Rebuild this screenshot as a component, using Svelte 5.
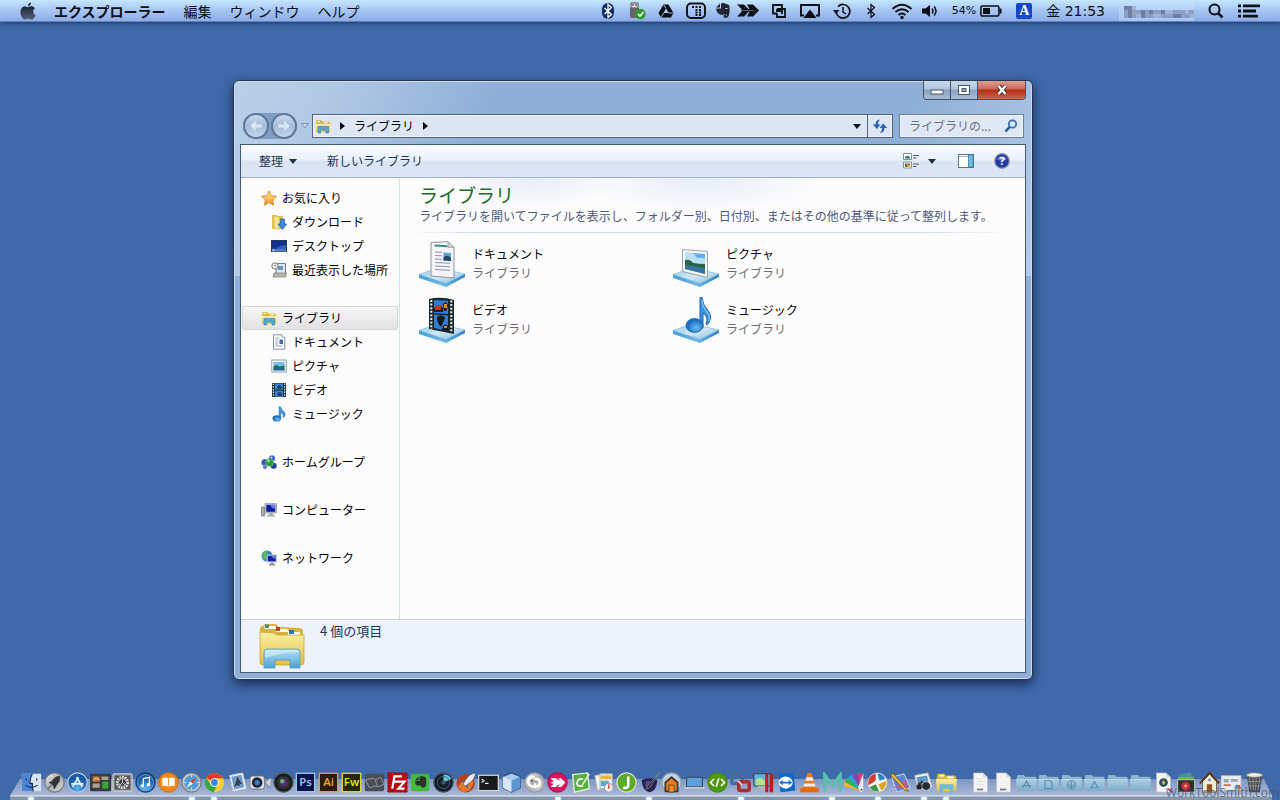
<script>
  const menus = ['エクスプローラー', '編集', 'ウィンドウ', 'ヘルプ'];

  const navGroups = [
    {
      label: 'お気に入り', icon: 'star',
      items: [
        { label: 'ダウンロード', icon: 'download' },
        { label: 'デスクトップ', icon: 'desktop' },
        { label: '最近表示した場所', icon: 'recent' }
      ]
    },
    {
      label: 'ライブラリ', icon: 'library', selected: true,
      items: [
        { label: 'ドキュメント', icon: 'doc' },
        { label: 'ピクチャ', icon: 'picture' },
        { label: 'ビデオ', icon: 'video' },
        { label: 'ミュージック', icon: 'music' }
      ]
    },
    { label: 'ホームグループ', icon: 'homegroup', items: [] },
    { label: 'コンピューター', icon: 'computer', items: [] },
    { label: 'ネットワーク', icon: 'network', items: [] }
  ];

  const libraries = [
    { label: 'ドキュメント', icon: 'doc' },
    { label: 'ピクチャ', icon: 'picture' },
    { label: 'ビデオ', icon: 'video' },
    { label: 'ミュージック', icon: 'music' }
  ];

  const bluetooth = 'M3.5 4.5L10.5 11L7 14V1L10.5 4L3.5 10.5';

  // [name, slot width, glyph width, markup on an 18 unit tall box]
  const status = [
    ['Bluetooth 共有', 28, 14, `<rect x="1" y="1" width="12" height="16" rx="6" fill="#0d2c66"/><path transform="translate(0 1.5)" d="${bluetooth}" fill="none" stroke="#fff" stroke-width="1.3"/>`],
    ['USB', 30, 18, `<path d="M3 1h7v5H3z" fill="#ddd" stroke="#555"/><path d="M2 6h9v8q0 2-2 2H4q-2 0-2-2z" fill="#666"/><path d="M5 2v2M8 2v2" stroke="#333"/><circle cx="12.500" cy="12" r="5.200" fill="#2a9a2c"/><path d="M10 12l2 2 3.500-4" fill="none" stroke="#fff" stroke-width="1.600"/>`],
    ['Drive', 28, 16, `<path d="M5.500 2.500h5l5 8.500-2.500 4.500H3L.5 11z" fill="#0c0f14"/><path d="M8 6.500L10.800 11H5.300z" fill="#a9cbf6"/><path d="M8 6.500L5.500 2.500M10.500 11h5M5.500 11L3 15.500" stroke="#a9cbf6" stroke-width=".9"/>`],
    ['表示', 32, 20, `<rect x="1" y="1.500" width="18" height="14.500" rx="4" fill="none" stroke="#0c0f14" stroke-width="1.900"/><path d="M6 5h2M9.500 5h2M13 5h2M9.500 8h2M13 8h2M9.500 10.500h2M13 10.500h2M9.500 13h2M13 13h2" stroke="#0c0f14" stroke-width="2"/>`],
    ['Evernote', 22, 14, `<path d="M0 5.500L4 1.500v4zM5 1.500Q8 .5 10 2q3 0 3.300 2 .8 4-.1 8-.7 4-3.700 4-2 0-2-2t2.500-2v2q1 0 1-1-1-1.500-3-1-1 1.500-4 .5Q0 11 .3 6.500H5z" fill="#20262f"/><path d="M9.500 6.500h2" stroke="#c6dffa"/>`],
    ['Skitch', 28, 22, `<path d="M0 2.500h7L11.500 7h1L10 2.500h6L22 8.500l-6 6h-6l2.500-4.500h-1L7 14.500H0L4.500 10V7z" fill="#0c0f14"/><path d="M5 8.500h12" stroke="#7185a4" stroke-width=".7"/>`],
    ['仮想マシン', 34, 16, `<path d="M6 11.500H2V3h9v3M6 7h8v8H6v-3.500M6 7v2h5v3" fill="none" stroke="#0c0f14" stroke-width="1.800"/>`],
    ['AirPlay', 28, 20, `<path d="M4 13.500H1V3h18v10.500h-3" fill="none" stroke="#0c0f14" stroke-width="1.900"/><path d="M10 7.500l6.500 8.500h-13z" fill="#0c0f14"/>`],
    ['Time Machine', 36, 18, `<path d="M3.200 10A6.800 6.800 0 1 0 5 4.600" fill="none" stroke="#0c0f14" stroke-width="1.700"/><path d="M0 8h6.500L3 12z" fill="#0c0f14"/><path d="M10 5v5l3 2" fill="none" stroke="#0c0f14" stroke-width="1.500"/>`],
    ['Bluetooth', 22, 12, `<path transform="translate(-1 1.500)" d="${bluetooth}" fill="none" stroke="#0c0f14" stroke-width="1.200"/>`],
    ['Wi-Fi', 40, 22, `<path d="M1.500 7Q11-1.500 20.500 7M4.500 10q6.500-5.500 13 0M7.500 13q3.500-3 7 0" fill="none" stroke="#0c0f14" stroke-width="2.100"/><circle cx="11" cy="15.500" r="1.700" fill="#0c0f14"/>`],
    ['音量', 16, 16, `<path d="M0 6.500h3.500L8 3v12L3.500 11.500H0z" fill="#0c0f14"/><path d="M10 6.500q2 2.500 0 5M12.300 4.500q3.400 4.500 0 9" fill="none" stroke="#0c0f14" stroke-width="1.500"/>`]
  ];

  const letterTile = (bg, fg, t) =>
    `<rect x="1.500" y="1.500" width="21" height="21" fill="${bg}" stroke="${fg}" stroke-width="1.400"/><text x="12" y="16.500" text-anchor="middle" font-family="Open Sans, sans-serif" font-weight="600" font-size="13" fill="${fg}">${t}</text>`;
  const folder = (mark) =>
    `<path d="M1 5q0-1.500 1.500-1.500H9l2 2h11q1.500 0 1.500 1.500v13H1z" fill="#8ab5cf"/><path d="M0 8.500h24L23 21.500H1z" fill="url(#macfolder)"/><path d="M0 8.500h24" stroke="#c3dfed" stroke-width=".8"/><g fill="none" stroke="#5d8fae" stroke-width="1.400">${mark}</g>`;
  const page = (extra) =>
    `<path d="M4 1h11l5 5v17H4z" fill="#f4f4f4" stroke="#bbb" stroke-width=".7"/><path d="M15 1v5h5" fill="#d4d4d4"/>${extra}`;
  const disc = (fill, ring, extra) =>
    `<circle cx="12" cy="12" r="11" fill="${fill}" stroke="${ring}" stroke-width="1.300"/>${extra}`;

  const dockApps = [
    ['Finder', `<rect x="1" y="2" width="22" height="20" fill="#d8e4f2"/><path d="M1 2h12q-3 5-3 11h3q0 5 1 9H1z" fill="#4b85d6"/><path d="M6 7v3M18 7v3M5 15q7 5 14 0M13 2q-3 5-3 11h3q0 5 1 9" fill="none" stroke="#17335f" stroke-width="1.300"/>`, true],
    ['Launchpad', disc('url(#silver)', '#777', `<path d="M18 5q-6 0-9 6l-3 1 2 1 3 3 1 3 2-4q4-3 4-10zM8 15l-3 4" fill="#333" stroke="#333"/>`)],
    ['App Store', disc('url(#blueball)', '#c3cbd6', `<path d="M6.500 17L13 6M17.500 17L11 6M5 13.500h14" stroke="#e9f6ff" stroke-width="2"/>`)],
    ['Mission Control', `<rect x="0" y="2" width="24" height="20" rx="1.500" fill="#393c3f"/><path d="M3 5h8v6H3z" fill="#c7773b"/><path d="M13 5h8v4h-8zM3 13h8v5H3z" fill="#a9a394"/><path d="M14 11h7v8h-7z" fill="#3aa33a"/><path d="M4 9l3-2 4 2" stroke="#f4d59a" fill="none"/>`],
    ['システム環境設定', `<rect x="1" y="2" width="22" height="20" rx="1" fill="#9da0a3" stroke="#d8d8d8"/><rect x="3" y="4" width="18" height="16" fill="#55585b"/><circle cx="12" cy="12" r="6" fill="none" stroke="#dcdcdc" stroke-width="3" stroke-dasharray="2 1"/><circle cx="12" cy="12" r="4.500" fill="#3b3d3f" stroke="#bdbdbd"/><path d="M12 12V8M12 12l3 3M12 12l-3 3" stroke="#ddd"/>`],
    ['iTunes', disc('url(#blueball)', '#1a3a63', `<circle cx="12" cy="12" r="9" fill="none" stroke="#7cc2f4" stroke-width=".7"/><path d="M9.500 16V7.500l7-1.500v8.500" fill="none" stroke="#fff" stroke-width="1.500"/><circle cx="8.300" cy="16" r="2" fill="#fff"/><circle cx="15.300" cy="14.700" r="2" fill="#fff"/>`)],
    ['iBooks', disc('#f08a1c', '#d97410', `<path d="M5 7q4-1.500 7 .5 3-2 7-.5v9q-4-1-7 .8-3-1.800-7-.8z" fill="#fff"/><path d="M12 7.500v9" stroke="#f08a1c"/>`)],
    ['Safari', disc('url(#silver)', '#777', `<circle cx="12" cy="12" r="8.300" fill="#4d9edb"/><path d="M17.500 6l-4 7.500-3-3z" fill="#e23c2a"/><path d="M6.500 18l4-7.500 3 3z" fill="#fff"/><path d="M12 4v2M12 18v2M4 12h2M18 12h2" stroke="#fff"/>`), true],
    ['Chrome', `<circle cx="12" cy="12" r="11" fill="#f7cf2e"/><path d="M12 12L2.500 6.500A11 11 0 0 1 21.700 7H12z" fill="#df3b2e"/><path d="M2.500 6.500A11 11 0 0 0 11 23l4.500-8.500-8-.5z" fill="#37a446"/><circle cx="12" cy="12" r="5" fill="#fff"/><circle cx="12" cy="12" r="3.900" fill="#3f86e0"/>`, true],
    ['Mail', `<path d="M3 4l15-3 4 18-15 3z" fill="#f5f5f5" stroke="#c8c8c8"/><path d="M5 5.500L16.500 3l3.200 14.500L8 20z" fill="#6d9bd1"/><path d="M12 5l2 4 4 5-4-1 1 3-4-1-3 2 2-5z" fill="#38404c"/>`],
    ['FaceTime', `<rect x="0" y="4.500" width="16.500" height="15" rx="3" fill="#dfe2e5" stroke="#6d7278"/><path d="M17 12l7-6v12z" fill="#d3d6d9" stroke="#6d7278" stroke-width=".8"/><circle cx="8.200" cy="12" r="6" fill="#1b2533"/><circle cx="8.200" cy="12" r="3" fill="#3f7fc0"/>`],
    ['カメラ', disc('#1b1c1e', '#55585c', `<circle cx="12" cy="12" r="7.500" fill="#2d3233"/><circle cx="12" cy="12" r="4.500" fill="#5b2a6e"/><circle cx="10.500" cy="10.500" r="2.500" fill="#5db07c"/>`)],
    ['Photoshop', letterTile('#0c1250', '#9fd2f5', 'Ps')],
    ['Illustrator', letterTile('#2c1c0c', '#f2a33a', 'Ai')],
    ['Fireworks', letterTile('#26280c', '#e5e62f', 'Fw')],
    ['ブック', `<rect x="1" y="2" width="22" height="20" rx="2" fill="#4a4e54"/><path d="M2 9l8-2 3 2 6-3 4 8-7 3-3-1-7 2zM13 9l2 7" fill="none" stroke="#9a9fa6"/>`],
    ['FileZilla', `<rect x="1" y="1" width="22" height="22" fill="#b80c14" stroke="#8c070d" stroke-dasharray="2 1"/><path d="M6 19L8.500 5H17M7 11h7M13 11h7l-7 8h7" fill="none" stroke="#fff" stroke-width="2.500"/>`],
    ['Evernote', `<rect x="1" y="2" width="21" height="20" rx="3" fill="#45b83e"/><path d="M6 9l4-4v4zM11 5q7-1 7.500 3 .8 10-3.500 10-2.500 0-2.500-2.500h-4Q5.500 15 6 10h5z" fill="#26332a"/>`],
    ['レーダー', disc('#141d25', '#40505e', `<path d="M12 12l9-4A9.500 9.500 0 0 0 12 3z" fill="#6cc6e0"/><circle cx="12" cy="12" r="7" fill="none" stroke="#3b6c80"/><circle cx="12" cy="12" r="2.500" fill="#325c6c"/>`)],
    ['ロケット', `<circle cx="11" cy="13" r="10.500" fill="#b3401c"/><path d="M2 17q7-12 18-6-2 12-12 12z" fill="#e8772b"/><path d="M22 1q-7 1-11 8l-3 5 3 2 5-4q6-4 6-11z" fill="#e4e9ef" stroke="#555" stroke-width=".7"/><path d="M10 9l-5 2 4 1M14 14l-1 6-2-4" fill="#4b6c9f"/>`],
    ['ターミナル', `<rect x="0" y="3" width="24" height="19" fill="#cfd2d5"/><rect x="1.500" y="4.500" width="21" height="16" fill="#17191b"/><path d="M4 8l3 2-3 2M8 13h4" fill="none" stroke="#eee" stroke-width="1.200"/>`],
    ['VirtualBox', `<path d="M12 1l10 4v13l-10 5L2 18V5z" fill="#a9cdf0" stroke="#2f5178" stroke-width="1.400"/><path d="M2 5l10 5v13L2 18z" fill="#d6e8f8"/><path d="M12 10l10-5v13l-10 5z" fill="#5e97cf"/>`],
    ['ファイル', disc('url(#silver)', '#999', `<path d="M12 6q-6-2-7 4t6 7M12 8q6-1 6 4t-5 5q-1-2 0-4" fill="none" stroke="#fff" stroke-width="3"/><circle cx="9" cy="10" r="1" fill="#333"/>`)],
    ['Skitch', disc('#e0145c', '#b50c46', `<path d="M4 7h6l3 2.500h2L12 7h4l5 5-5 5h-4l3-2.500h-2L10 17H4l4-4H5v-2h3z" fill="#fff"/>`), true],
    ['Coda', `<path d="M3 3l17-2 2 18-17 4z" fill="#56b03a" stroke="#e6f1d8" stroke-width="1.500"/><path d="M15 8q-6-1-7 4t7 4" fill="none" stroke="#fff" stroke-width="2"/><path d="M22 2l-8 13" stroke="#d6eec9" stroke-width="2"/>`],
    ['書類', `<path d="M2 4l12-2 3 16-12 3z" fill="#f2f2f2" stroke="#aaa"/><path d="M8 2h14v17H8z" fill="#e8eef5" stroke="#aaa"/><path d="M9 4h12v4H9z" fill="#f0b23b"/><path d="M9 10h9v6H9z" fill="#64a2d8"/><circle cx="18" cy="18" r="5" fill="#eee" stroke="#999"/><path d="M18 14v5" stroke="#d33" stroke-width="1.500"/>`],
    ['Jedit', disc('#5cab27', '#dfe8d6', `<path d="M14 5v10q0 4-6 3" fill="none" stroke="#fff" stroke-width="3"/>`)],
    ['ペン', `<path d="M3 9q9-4 18 0-1 13-9 14Q4 22 3 9z" fill="#25204f"/><circle cx="11" cy="14" r="4" fill="#51488a"/><path d="M23 1L10 16l-2 4 4-2z" fill="#22242a" stroke="#999" stroke-width=".7"/>`, true],
    ['ホーム', disc('#c6d2da', '#91a2ae', `<path d="M5 12l7-6 7 6v10H5z" fill="#ef7b1a" stroke="#383838" stroke-width="2"/><path d="M9 15h6v8H9z" fill="#f68f24" stroke="#444"/>`)],
    ['ノート', `<path d="M3 6h18v11H3z" fill="#5f9fda" stroke="#2b3b4a"/><path d="M0 17h24l-1 2H1z" fill="#c4cad0"/>`],
    ['コード', disc('#4f9a12', '#448a0c', `<path d="M8 8l-4 4 4 4M16 8l4 4-4 4M13.500 7l-3 10" fill="none" stroke="#fff" stroke-width="1.900"/>`)],
    ['VMware', `<rect x="2" y="3" width="12" height="10" rx="2" fill="none" stroke="#466b97" stroke-width="4"/><rect x="10" y="11" width="12" height="10" rx="2" fill="none" stroke="#a92d31" stroke-width="4"/><path d="M9 10l5 5" stroke="#ddd" stroke-width="2"/>`, true],
    ['Parallels', `<path d="M1 2h20v14H1z" fill="#60b3dc" stroke="#333"/><path d="M3 9q6-5 11 2v4H3z" fill="#b8dd8d"/><path d="M6 16h8l2 4H4z" fill="#aeb5bb"/><path d="M14 2h3.500v21H14zM19 2h4v21h-4z" fill="#b81d21"/>`],
    ['TeamViewer', `<path d="M3 2l17-1 2 20-17 2z" fill="#0f66c8"/><ellipse cx="11" cy="12" rx="8" ry="7" fill="#fff"/><path d="M3.500 12l4-3v2h7V9l4 3-4 3v-2h-7v2z" fill="#1a6cc9"/>`],
    ['VLC', `<path d="M10 1h4l6 18H4z" fill="#ef7d16"/><path d="M8.500 6h7l1.300 4H7.200zM6 13h12l1 3.500H5z" fill="#eee"/><path d="M2 18h20l1 5H1z" fill="#e4690c"/>`],
    ['M', `<path d="M3 22V3l9 13 9-13v19" fill="none" stroke="#55c2ae" stroke-width="3.500"/>`, true],
    ['カラー', `<path d="M20 22L1 11l3-5z" fill="#35b34a"/><path d="M20 22L4 6l5-3z" fill="#2da1d6"/><path d="M20 22L9 3l6-2z" fill="#8048b5"/><path d="M20 22L15 1h6z" fill="#e0367a"/><path d="M20 22L0 16v-5z" fill="#f2b928"/><path d="M22 1v20l-3 2-3-5z" fill="#efefef"/><circle cx="20" cy="20" r="1" fill="#222"/>`],
    ['Picasa', `<circle cx="12" cy="12" r="11" fill="#fff" stroke="#ccc"/><path d="M12 2a10 10 0 0 1 9 6l-7 2z" fill="#2d82d0"/><path d="M22 10a10 10 0 0 1-6 11l-3-7z" fill="#e0a51e"/><path d="M14 22A10 10 0 0 1 3 17l7-3z" fill="#3f9b43"/><path d="M2 15A10 10 0 0 1 10 2v8z" fill="#d83a2c"/><path d="M9 9h6l-3 6z" fill="#eee"/>`, true],
    ['描画', `<path d="M2 6l14-4 7 16-15 5z" fill="#5a85cf" stroke="#dfe4ef"/><path d="M4 18l14-9 3 9z" fill="#c5579a"/><path d="M3 1l16 18 2 3-4-1L1 4z" fill="#f0b52a" stroke="#5b4212" stroke-width=".7"/>`],
    ['プレビュー', `<path d="M2 4l15-3 5 16-16 4z" fill="#f3f3f3" stroke="#bbb"/><path d="M4 6l12-2 3 12-12 3z" fill="#5e96c8"/><path d="M5 13l5-3 8 4v3l-11 2z" fill="#35424a"/><circle cx="15" cy="16" r="5" fill="#252b35" stroke="#cfd3d8"/><circle cx="7" cy="17" r="3" fill="#222"/>`, true],
    ['エクスプローラー', `<path d="M1 4q0-2 2-2h7l1 2h10q2 0 2 2v15H1z" fill="#d9b944"/><path d="M4 4h5M13 6h7" stroke="#fff" stroke-width="2"/><path d="M0 8h24l-1 14H1z" fill="url(#yellow)"/><path d="M4 23v-9h16v9h-4v-4H8v4z" fill="#72b9dc"/>`, true]
  ];

  const dockFiles = [
    ['MD', page(`<path d="M7 8h8M7 11h10M7 14h9" stroke="#ddd"/><path d="M8 20h7" stroke="#777" stroke-width="2"/>`)],
    ['TXT', page(`<path d="M8 20h7" stroke="#777" stroke-width="2"/>`)],
    ['アプリケーション', folder(`<path d="M8 18l4-8 4 8M7 15.500h10"/>`)],
    ['書類フォルダ', folder(`<path d="M8 10h6l2 2v7H8z"/>`)],
    ['ダウンロード', folder(`<circle cx="12" cy="14.500" r="4.500"/><path d="M12 11v6M9.500 14.500l2.500 3 2.500-3"/>`)],
    ['ドライブ', folder(`<path d="M12 11l4 7H8z"/>`)],
    ['フォルダ', folder('')],
    ['フォルダ', folder('')],
    ['ログ', page(`<circle cx="12" cy="12" r="5" fill="#2a4d60"/><path d="M10 12l2-3 2 3-2 3z" fill="#dfb632"/><path d="M17 19l5 4" stroke="#bb3946" stroke-width="2"/>`)],
    ['写真', `<path d="M3 3l14-3 3 12-13 3z" fill="#3f91a5"/><path d="M2 6l18-1 2 14H3z" fill="#71b04d"/><path d="M2 9h19v14H2z" fill="#253224" stroke="#eee" stroke-width=".7"/><circle cx="11" cy="16" r="5" fill="#d42458"/><circle cx="11" cy="16" r="1.700" fill="#f0b73d"/>`],
    ['家', `<path d="M4 11l8-9 8 9v12H4z" fill="#f1ead5" stroke="#7a5632"/><path d="M1 13L12 1l11 12" fill="none" stroke="#5d3b22" stroke-width="2.500"/><path d="M9 14h6v9H9z" fill="#8d5427"/><circle cx="12" cy="9" r="1.600" fill="#6892af"/>`],
    ['ウインドウ', `<path d="M0 4h23v17H0z" fill="#e9edf1" stroke="#aaa"/><path d="M3 8h6v4H3zM11 8h8v3h-8z" fill="#99a8b4"/><path d="M3 15h8" stroke="#ca6b52" stroke-width="2"/><circle cx="19" cy="18" r="3.500" fill="#4d8ed8"/><path d="M19 14.500a3.500 3.500 0 0 1 3 5L19 18z" fill="#e04838"/><path d="M22 19.500a3.500 3.500 0 0 1-5 1L19 18z" fill="#efba32"/>`],
    ['ゴミ箱', `<path d="M3 3l3 20h12l3-20z" fill="#484b4e"/><path d="M6 6l2 15M10 6l1 15M14 6l-1 15M18 6l-2 15M4 11h16M5 16h14" stroke="#a0a4a8" stroke-width=".8"/><ellipse cx="12" cy="3.500" rx="9.500" ry="2.700" fill="#d9dbdd" stroke="#777"/><path d="M6 4q2-4 4-1 3-3 4 0 3-2 4 1z" fill="#fff"/>`]
  ];

  const smallIcons = {
    star: `<path d="M8 .8l2.200 4.900 5.300.6-3.900 3.600 1 5.300L8 12.500l-4.600 2.700 1-5.300L.5 6.300l5.300-.6z" fill="url(#starfill)" stroke="#d9851c" stroke-width=".9"/>`,
    download: `<path d="M1 1h5l1 1h5v13H1z" fill="#e4c250"/><path d="M3 2l5 1v12.500l-5-1.500z" fill="#f8e694" stroke="#cfae45" stroke-width=".5"/><path d="M9.500 5h4v5h2.300L11.500 15.500 7 10h2.500z" fill="#3b8be0" stroke="#1f5ba8" stroke-width=".7"/>`,
    desktop: `<rect x=".5" y="2.500" width="15" height="11" fill="#2c5fc0" stroke="#22365e"/><path d="M1 3h14v4Q7 7 3 13H1z" fill="#16308c"/><path d="M1 11.500h14v2H1z" fill="#6784b4"/><circle cx="2.500" cy="12" r="1.300" fill="#8fc1e8"/>`,
    recent: `<path d="M5 1.500h9.500V13H5z" fill="#dfe6ee" stroke="#6d7d8e"/><path d="M7 4h5v4H7z" fill="#6796c0"/><circle cx="4" cy="4" r="3.200" fill="#f2f2f2" stroke="#777"/><path d="M4 2.500V4h1.500" fill="none" stroke="#555" stroke-width=".7"/><path d="M3 11h12.500l-1 4H2z" fill="#b9b5ac" stroke="#7f7b73" stroke-width=".7"/>`,
    library: `<path d="M1 3q0-1 1-1h4l1 1.500h7q1 0 1 1V14H1z" fill="#d8bb4c"/><path d="M2.500 3.500H5M9 4.700h4" stroke="#fff"/><path d="M.3 6h15.400L15 14H1z" fill="url(#yellow)"/><path d="M3 15V8.500h10.500V15H11v-3H5.500v3z" fill="#4fa9d8" stroke="#2b85b5" stroke-width=".6"/>`,
    doc: `<path d="M2.500.8h8.500l2.800 2.800v11.600H2.500z" fill="#fff" stroke="#8193aa"/><path d="M11 .8v2.800h2.800" fill="#d5dfe9" stroke="#8193aa" stroke-width=".6"/><path d="M4.300 4h4M4.300 6h3M4.300 8h3M4.300 10h3M4.300 12h7.500" stroke="#7c93b8" stroke-width=".8"/><path d="M8.500 5.500h3.500v4.500H8.500z" fill="#376fa8"/>`,
    picture: `<rect x=".8" y="2" width="14.400" height="12" fill="#fff" stroke="#8c9cab"/><path d="M2.500 3.800h11v8.500h-11z" fill="#75bdeb"/><path d="M2.500 8.500q3-3 6 0l5-1v4.800h-11z" fill="#24735e"/><path d="M2.500 10.700h11v1.600h-11z" fill="#1f62a0"/>`,
    video: `<path d="M1 1h14v14H1z" fill="#19303a"/><path d="M4 1.500h8v6H4zM4 8.700h8v6H4z" fill="#3a86cf"/><path d="M6 5q2-4 5 0l-1 2H7zM6 12q3-4 5 0v2H7z" fill="#1b4272"/><path d="M2.400 1.500v13M13.600 1.500v13" stroke="#d5ecef" stroke-width="1.200" stroke-dasharray="1.500 1.200"/>`,
    music: `<path d="M8.200 12V.8h1.200q.6 2.600 3 4.200 3 2.500.8 6-.6.500-1 0Q13 7.500 9.700 6.500v6z" fill="#3f97e2" stroke="#1d67b4" stroke-width=".6"/><ellipse cx="5.800" cy="12.400" rx="4.300" ry="3.100" fill="url(#note)"/>`,
    homegroup: `<g stroke="#fff" stroke-width=".3"><circle cx="11" cy="4.500" r="3.200" fill="#2f5cc6"/><circle cx="3.800" cy="8.500" r="3.500" fill="#2f54b2"/><circle cx="12.600" cy="11.800" r="3.200" fill="#213f98"/><circle cx="8.500" cy="8.500" r="4" fill="#2c9a3c"/><circle cx="4" cy="13" r="2.200" fill="#5577c6"/></g><circle cx="7.500" cy="7" r="1.200" fill="#bfe9bd"/><circle cx="10.500" cy="3.500" r="1" fill="#c2d5fb"/>`,
    computer: `<path d="M.5 5h3v9h-3z" fill="#9fb09f" stroke="#667" stroke-width=".6"/><path d="M4 1.500h11.500v9.500H4z" fill="#c5ccd5" stroke="#7c8694" stroke-width=".6"/><path d="M5.300 2.800h8.900v7H5.300z" fill="#101ca0"/><path d="M9.500 2.800h4.700v4q-4 0-4.700-4z" fill="#6c7fe6"/><path d="M8 11h4v2h2v1.500H6V13h2z" fill="#a5adb5"/>`,
    network: `<circle cx="6" cy="6" r="5.500" fill="#2f83c9"/><path d="M1 4q3-4 6-3l-2 4 1 3-3 2Q1 8 1 4z" fill="#54bd58"/><path d="M5.500 4.500H16v8H5.500z" fill="#c3cbd5"/><path d="M6.700 5.700h8.100v5.600H6.700z" fill="#1220a8"/><path d="M10.500 5.700h4.300v3q-3.500 0-4.300-3z" fill="#6377e2"/><path d="M9.500 12.500h3v1.500h1.700v1.500H8V14h1.500z" fill="#8d969f"/>`
  };

  const stand = `<path d="M1 34.500L20 28l27 6-19 9.500z" fill="url(#standtop)" stroke="#7fb8dc" stroke-width=".7"/><path d="M1 34.500v3.500l27 9 19-10v-3L28 43.500z" fill="url(#standside)"/>`;
  const bigIcons = {
    doc: `${stand}<path d="M13 36V2.500l17-.8 6 6V38z" fill="#f4f4fa" stroke="#8f939c"/><path d="M30 1.700v5.500l6 .5z" fill="#cdd3da" stroke="#8f939c" stroke-width=".7"/><path d="M16.500 5.500l13 .8" stroke="#3d8e8d" stroke-width="2"/><path d="M17 12l7 .3M17 15.500l7 .3M17 19l7 .3M17 22.500l15 .8M17 26l15 .8M17 29.500l15 .8" stroke="#8388a5" stroke-width=".9"/><path d="M25.500 12.500l7.500.5v8l-7.500-.5z" fill="#5ba5d4"/><path d="M25.500 17q4-3 7.500 1v3l-7.500-.5z" fill="#244a68"/>`,
    picture: `${stand}<path d="M10.500 9.500l25 2v26l-25-6z" fill="#f7f7f7" stroke="#9aa2a9"/><path d="M13 12.500l20 1.500v20l-20-5z" fill="#5eb0ea"/><path d="M13 13q10-1 12 5 5-1 8 1v6l-20-3z" fill="#b9e0f6"/><path d="M13 20q5-1 8 3 6 1 12 1v6l-20-4z" fill="#2b6546"/><path d="M13 25l20 3v6l-20-5z" fill="#35749b"/>`,
    video: `${stand}<path d="M11 3Q23 0 36 4v34L11 33z" fill="#18282b"/><path d="M16 4l14 .8V18l-14-1zM16 18.500l14 1V35l-14-3z" fill="#2d7ed4"/><path d="M16 12l5-3 4 3v4l-9-.3zM25 8q4-4 5 2l-2 5h-2zM19 21q5-4 8 1l-4 9q-4-4-4-10zM25 30q3-3 5 0v5l-6-1z" fill="#14181d"/><path d="M17 9h6v5h-6z" fill="#b73b35"/><path d="M26 8h3v4h-3zM26 30h3v2h-3z" fill="#dc8c2c"/><path d="M13.300 4v29.500M33.300 4.500V37" stroke="#e1f2f2" stroke-width="2" stroke-dasharray="2 1.600"/>`,
    music: `${stand}<path d="M28 32V1.500h2Q31 9 35.500 14q6 7 .5 14-.8 1-2 0 3-7-3-11V32z" fill="#3d93dd" stroke="#1c66af"/><path d="M30 4q1 8 5 12 3.500 4 2 9" fill="none" stroke="#8cc9f6" stroke-width="1.200"/><ellipse cx="22.500" cy="29.500" rx="8.500" ry="7" fill="url(#note)" stroke="#1c66af" stroke-width=".8"/>`
  };
</script>

{#snippet dockItem([name, art, running])}
  <li>
    <button type="button" aria-label={name}>
      <svg viewBox="0 0 24 24" width="21" height="21">{@html art}</svg>
    </button>
    <i class:running></i>
  </li>
{/snippet}

<svg class="defs" width="0" height="0" aria-hidden="true">
  <defs>
    <linearGradient id="yellow" x2="0" y2="1"><stop stop-color="#fbf0a8" /><stop offset="1" stop-color="#e2bf3f" /></linearGradient>
    <linearGradient id="macfolder" x2="0" y2="1"><stop stop-color="#a9d0e4" /><stop offset="1" stop-color="#7dadca" /></linearGradient>
    <linearGradient id="silver" x2="1" y2="1"><stop stop-color="#f4f4f4" /><stop offset=".5" stop-color="#a9abad" /><stop offset="1" stop-color="#dcdcdc" /></linearGradient>
    <radialGradient id="blueball" cy=".8"><stop stop-color="#5fb8f4" /><stop offset="1" stop-color="#1a5ba8" /></radialGradient>
    <radialGradient id="note" cx=".6" cy=".65"><stop stop-color="#67bdf5" /><stop offset="1" stop-color="#1d6fc0" /></radialGradient>
    <linearGradient id="starfill" x2="0" y2="1"><stop stop-color="#fff29a" /><stop offset="1" stop-color="#f58a1f" /></linearGradient>
    <linearGradient id="standtop" x2="1" y2="1"><stop stop-color="#8fc3df" /><stop offset=".5" stop-color="#d2e8f3" /><stop offset="1" stop-color="#7fbce0" /></linearGradient>
    <linearGradient id="standside" x2="1"><stop stop-color="#3f9fd8" /><stop offset=".5" stop-color="#6db8e3" /><stop offset="1" stop-color="#2f86c4" /></linearGradient>
    <linearGradient id="tray" x2="0" y2="1"><stop stop-color="#b6e2f6" /><stop offset="1" stop-color="#4ba2d4" /></linearGradient>
    <linearGradient id="apple" x2="0" y2="1"><stop stop-color="#1b2433" /><stop offset="1" stop-color="#53637d" /></linearGradient>
  </defs>
</svg>

<div class="desktop">
  <header class="menubar">
    <button type="button" class="apple" aria-label="アップル">
      <svg viewBox="0 0 16 18" width="16" height="18"><path d="M8 5.200C9 5 10 4.200 11.700 4.300q2.200.2 3.300 1.900-2 1.200-1.900 3.400.1 2.500 2.400 3.500-1.500 4.400-3.600 4.500c-1.500 0-2-.8-3.600-.8s-2.200.8-3.500.8C2.300 17.500.5 13.500.5 10.300c0-3.800 2.200-5.700 4.300-5.700C6.100 4.600 7.200 5.300 8 5.200z" fill="url(#apple)" /><path d="M8 4.200Q8 1.100 11 .4 11.200 3.400 8 4.200z" fill="#1b2433" /></svg>
    </button>
    <nav>
      {#each menus as m, i}<button type="button" class:app={i === 0}>{m}</button>{/each}
    </nav>
    <div class="status">
      {#each status as [name, slot, w, art]}
        <button type="button" aria-label={name} style="width: {slot}px">
          <svg viewBox="0 0 {w} 18" width={w} height="18">{@html art}</svg>
        </button>
      {/each}
    </div>
    <button type="button" class="battery">
      54%
      <svg viewBox="0 0 22 12" width="22" height="12"><rect x=".9" y=".9" width="18" height="10.200" rx="1.500" fill="none" stroke="#0c0f14" stroke-width="1.500" /><path d="M3 3h7v6H3z" fill="#0c0f14" /><path d="M20.500 3.500v5" stroke="#0c0f14" stroke-width="2" /></svg>
    </button>
    <button type="button" class="ime">A</button>
    <span class="clock">金 21:53</span>
    <svg class="user" viewBox="0 0 75 20" width="75" height="20" aria-hidden="true">
      <path d="M0 0h75v20H0z" fill="#c3dcfa" fill-opacity=".5" />
      <path d="M5 5h8v4H5zM5 9h70v8H5z" fill="#8c9fc1" />
      <path d="M5 5h8v4H5zM9 9h4v8H9zM22 9h4v8h-4zM30 9h4v4h-4zM42 9h4v4h-4zM54 13h8v4h-8z" fill="#6d7fa2" />
      <path d="M13 5h4v4h-4zM17 13h5v4h-5zM34 13h8v4h-8zM46 9h8v4h-8zM66 9h4v4h-4zM71 13h4v4h-4z" fill="#a1b4d7" />
    </svg>
    <button type="button" aria-label="検索">
      <svg viewBox="0 0 16 16" width="16" height="16"><circle cx="6.500" cy="6.500" r="5" fill="none" stroke="#0c0f14" stroke-width="2" /><path d="M10 10l4.500 4.500" stroke="#0c0f14" stroke-width="2.600" /></svg>
    </button>
    <button type="button" aria-label="通知センター">
      <svg viewBox="0 0 22 14" width="22" height="14"><path d="M0 1.800h3M0 7h3M0 12.200h3M5 1.800h17M5 7h13M5 12.200h15" stroke="#0c0f14" stroke-width="2.800" /></svg>
    </button>
  </header>

  <main>
    <section class="window" aria-label="ライブラリ">
      <div class="titlebar">
        <div class="caption">
          <button type="button" aria-label="最小化"><svg viewBox="0 0 14 12" width="14" height="12"><rect x="1" y="6" width="12" height="4" fill="#fff" stroke="#4a5668" /></svg></button>
          <button type="button" aria-label="最大化"><svg viewBox="0 0 14 12" width="14" height="12"><rect x="1.500" y="1.500" width="11" height="9" fill="#fff" stroke="#4a5668" /><rect x="5" y="4.500" width="4" height="3" fill="#93a9c6" stroke="#4a5668" /></svg></button>
          <button type="button" class="close" aria-label="閉じる"><svg viewBox="0 0 14 12" width="14" height="12"><path d="M3.500 2l7 8M10.500 2l-7 8" stroke="#4c3034" stroke-width="4.200" /><path d="M3.500 2l7 8M10.500 2l-7 8" stroke="#fff" stroke-width="2.400" /></svg></button>
        </div>
      </div>

      <div class="navrow">
        <div class="travel">
          <button type="button" aria-label="戻る"><svg viewBox="0 0 16 16" width="16" height="16"><path d="M8 2v4h6v4H8v4L2 8z" fill="#dbe6f2" stroke="#b2c4da" stroke-width=".7" /></svg></button>
          <button type="button" aria-label="進む"><svg viewBox="0 0 16 16" width="16" height="16"><path d="M8 2v4H2v4h6v4l6-6z" fill="#dbe6f2" stroke="#b2c4da" stroke-width=".7" /></svg></button>
        </div>
        <button type="button" class="history" aria-label="履歴"><svg viewBox="0 0 8 6" width="8" height="6"><path d="M.5.500h7L4 5z" fill="#c5d6ea" stroke="#6f89ab" stroke-width=".8" /></svg></button>
        <div class="address">
          <svg viewBox="0 0 16 16" width="16" height="16">{@html smallIcons.library}</svg>
          <svg class="sep" viewBox="0 0 5 8" width="5" height="8"><path d="M0 0l5 4-5 4z" fill="#000" /></svg>
          <button type="button">ライブラリ</button>
          <svg class="sep" viewBox="0 0 5 8" width="5" height="8"><path d="M0 0l5 4-5 4z" fill="#000" /></svg>
          <button type="button" class="drop" aria-label="以前の場所"><svg viewBox="0 0 8 5" width="8" height="5"><path d="M0 0h8L4 5z" fill="#0b0b2b" /></svg></button>
          <button type="button" class="refresh" aria-label="更新"><svg viewBox="0 0 16 16" width="16" height="16"><path d="M8 1.500Q3.500 2 3.500 6.500H.8L4.800 11 8.500 6.500H6Q6 3.500 8 1.500z" fill="#2a63b4" /><path d="M8 15q4.500-.5 4.500-5h2.700l-4-4.500L7.500 10H10q0 3-2 5z" fill="#2a63b4" /></svg></button>
        </div>
        <label class="search">
          <input type="text" aria-label="検索" placeholder="ライブラリの..." />
          <svg viewBox="0 0 14 14" width="14" height="14"><circle cx="8.500" cy="5" r="3.700" fill="#dceafa" stroke="#2f6cb4" stroke-width="1.700" /><path d="M5.800 7.800L1.500 12.500" stroke="#255a9e" stroke-width="2.500" /></svg>
        </label>
      </div>

      <div class="client">
        <div class="toolbar">
          <button type="button">整理 <svg viewBox="0 0 8 5" width="8" height="5"><path d="M0 0h8L4 5z" fill="#1e3050" /></svg></button>
          <button type="button">新しいライブラリ</button>
          <div class="tools">
            <button type="button" aria-label="表示方法の変更"><svg viewBox="0 0 16 16" width="16" height="16"><path d="M.5.500h8v6h-8zM.5 9h8v6h-8z" fill="#fff" stroke="#7f91a8" /><path d="M2 4q2-2 5 0v1.500H2z" fill="#23736c" /><path d="M2 10.500h2.500V14H2z" fill="#477f2b" /><path d="M4.500 10.500H7V12H4.500z" fill="#c8443a" /><path d="M4.500 12H7v2H4.500z" fill="#d9b52c" /><path d="M10 2.500h6M10 5h3.500M10 11h6M10 13.500h3.500" stroke="#4c5c74" /></svg></button>
            <button type="button" aria-label="その他のオプション"><svg viewBox="0 0 8 5" width="8" height="5"><path d="M0 0h8L4 5z" fill="#1e3050" /></svg></button>
            <button type="button" class="preview" aria-label="プレビュー"><svg viewBox="0 0 16 14" width="16" height="14"><rect x=".5" y=".5" width="15" height="13" fill="#fdfdfe" stroke="#5b7594" /><path d="M1 2.500h10" stroke="#a7bacd" /><path d="M10.500 1h4.500v12h-4.500z" fill="#6fbfdc" stroke="#3a7ba0" stroke-width=".8" /></svg></button>
            <button type="button" aria-label="ヘルプ"><svg viewBox="0 0 16 16" width="16" height="16"><circle cx="8" cy="8" r="7.300" fill="#1f3aa5" stroke="#8f97a5" stroke-width="1.300" /><path d="M3 6q5-6 10 0-5 3-10 0z" fill="#6f86d5" /><text x="8" y="12" text-anchor="middle" font-family="Open Sans, sans-serif" font-weight="700" font-size="11" fill="#fff">?</text></svg></button>
          </div>
        </div>

        <div class="panes">
          <nav class="tree" aria-label="ナビゲーション">
            {#each navGroups as g}
              <ul>
                <li><a href="#top" class:selected={g.selected}><svg viewBox="0 0 16 16" width="16" height="16">{@html smallIcons[g.icon]}</svg>{g.label}</a></li>
                {#each g.items as item}
                  <li><a href="#top" class="child"><svg viewBox="0 0 16 16" width="16" height="16">{@html smallIcons[item.icon]}</svg>{item.label}</a></li>
                {/each}
              </ul>
            {/each}
          </nav>

          <div class="content">
            <div class="heading">
              <h1>ライブラリ</h1>
              <p>ライブラリを開いてファイルを表示し、フォルダー別、日付別、またはその他の基準に従って整列します。</p>
            </div>
            <ul class="grid">
              {#each libraries as lib}
                <li>
                  <svg viewBox="0 0 48 48" width="48" height="48">{@html bigIcons[lib.icon]}</svg>
                  <div><strong>{lib.label}</strong><span>ライブラリ</span></div>
                </li>
              {/each}
            </ul>
          </div>
        </div>

        <footer class="details">
          <svg viewBox="0 0 46 46" width="46" height="46">
            <path d="M1 6q0-3 3-3l2-2h11l3 3 20 1q4 0 4 3v32H1z" fill="#d5b33c" />
            <path d="M5 3h11l2 3H6zM17 6h11l2 3H17zM29 9h12v3H29z" fill="#fff" />
            <path d="M6 1.500h4V5H6z" fill="#3f9d46" /><path d="M17 4h4v4h-4z" fill="#c93b30" /><path d="M30 7h5v4h-5z" fill="#3573b8" />
            <path d="M1 9l14 1 3 2h27v27q0 3-3 3H4q-3 0-3-3z" fill="url(#yellow)" stroke="#c9a433" stroke-width=".8" />
            <path d="M5 45V29q0-3 3-3h30q3 0 3 3v16H31v-8H16v8z" fill="url(#tray)" stroke="#4a9cca" stroke-width=".8" />
            <path d="M6 35V29q0-2 2-2h30q2 0 2 2-15 0-34 6z" fill="#fff" fill-opacity=".4" />
          </svg>
          <span>4 個の項目</span>
        </footer>
      </div>
    </section>
  </main>

  <footer class="dock">
    <ul>
      {#each dockApps as d}{@render dockItem(d)}{/each}
      <li class="divider" aria-hidden="true"></li>
      {#each dockFiles as d}{@render dockItem(d)}{/each}
    </ul>
    <span class="mark">WorkToolSmith.com</span>
  </footer>
</div>

<style>
  :global(body) { margin: 0; }
  .defs { position: absolute; }
  .desktop {
    display: flex;
    flex-direction: column;
    min-height: 100vh;
    background: #4069aa;
    font: 12px/16px "Noto Sans CJK JP", sans-serif;
    color: #000;
  }
  button {
    display: flex;
    align-items: center;
    justify-content: center;
    margin: 0;
    padding: 0;
    border: 0;
    background: none;
    color: inherit;
    font: inherit;
    white-space: nowrap;
  }
  svg { flex: none; display: block; }
  ul { list-style: none; margin: 0; padding: 0; }

  .menubar {
    display: flex;
    align-items: center;
    gap: 14px;
    box-sizing: border-box;
    height: 22px;
    padding: 0 20px;
    background: linear-gradient(#c5e7fe, #a9c8f4 45%, #8caee8);
    border-bottom: 1px solid #6381b8;
    box-shadow: 0 1px 5px #1d3562;
    font-size: 14px;
    line-height: 20px;
    color: #0c0f14;
  }
  .menubar nav { display: flex; flex: 1; gap: 18px; margin-left: 4px; }
  .app { font-weight: 700; }
  .status { display: flex; }
  .battery { gap: 4px; font: 11px/20px "DejaVu Sans", sans-serif; }
  .ime {
    width: 16px;
    height: 16px;
    border-radius: 2px;
    background: #1747c4;
    color: #fff;
    font: 700 14px/16px "Liberation Serif", serif;
  }
  .clock { font-family: "DejaVu Sans", "Noto Sans CJK JP", sans-serif; font-size: 14px; white-space: nowrap; }

  main { flex: 1; display: flex; padding: 58px 247px 90px 233px; }
  .window {
    flex: 1;
    min-width: 0;
    display: flex;
    flex-direction: column;
    box-sizing: border-box;
    padding: 0 6px 6px;
    border: 1px solid #26364e;
    border-radius: 6px;
    background:
      linear-gradient(115deg, #b9cfe8 0, #b3cae5 10%, transparent 30%, transparent 78%, #b6cde8 100%) 0 0 / 100% 195px no-repeat,
      #8fafd7;
    box-shadow: inset 0 0 0 1px #c9dcf1, 0 4px 12px #142a52;
  }
  .titlebar { display: flex; justify-content: flex-end; height: 33px; }
  .caption {
    display: flex;
    height: 18px;
    border: 1px solid #44536a;
    border-top: 0;
    border-radius: 0 0 4px 4px;
    overflow: hidden;
  }
  .caption button {
    width: 27px;
    border-right: 1px solid #44536a;
    background: linear-gradient(#c8d8ea, #b1c5de 45%, #88a2c2 50%, #a5bdd9);
  }
  .caption .close {
    width: 47px;
    border: 0;
    background: linear-gradient(#dfa097, #cd6655 45%, #b12d19 50%, #cf6745);
  }
  .navrow { display: flex; align-items: center; height: 24px; margin-bottom: 6px; padding: 0 2px 0 3px; }
  .travel { display: flex; gap: 2px; border-radius: 13px; background: #7f9cc2; }
  .travel button {
    width: 26px;
    height: 26px;
    box-sizing: border-box;
    border: 2px solid #5d7797;
    border-radius: 50%;
    background: linear-gradient(#c9daec, #a1bcdc 50%, #c3d6ea);
  }
  .history { width: 15px; }
  .address {
    flex: 1;
    display: flex;
    align-items: center;
    box-sizing: border-box;
    height: 24px;
    margin-right: 6px;
    padding-left: 2px;
    border: 1px solid #51647f;
    background: #dde7f4;
    box-shadow: inset 0 0 0 1px #eff5fb;
  }
  .sep { margin: 0 9px; }
  .drop { width: 20px; height: 22px; margin-left: auto; }
  .refresh { width: 25px; height: 22px; border-left: 1px solid #51647f; }
  .search {
    display: flex;
    align-items: center;
    box-sizing: border-box;
    width: 125px;
    height: 24px;
    padding: 0 5px 0 9px;
    border: 1px solid #6a7f9c;
    background: #dfe8f4;
    box-shadow: inset 0 0 0 1px #eff5fb;
  }
  .search input {
    flex: 1;
    min-width: 0;
    padding: 0;
    border: 0;
    outline: 0;
    background: none;
    font: inherit;
  }
  .search input::placeholder { color: #6b7078; opacity: 1; }

  .client {
    flex: 1;
    display: flex;
    flex-direction: column;
    border: 1px solid #44597a;
    background: #fcfcfd;
  }
  .toolbar {
    display: flex;
    align-items: center;
    gap: 30px;
    height: 32px;
    padding: 0 15px 0 18px;
    border-bottom: 1px solid #9fb4d2;
    background: linear-gradient(#fafcff, #e9f1fb 45%, #dae5f4 52%, #dce6f5);
    color: #1e3257;
  }
  .toolbar button { gap: 6px; }
  .tools { display: flex; align-items: center; gap: 9px; margin-left: auto; }
  .tools .preview { margin: 0 11px 0 13px; }

  .panes { flex: 1; display: flex; }
  .tree {
    box-sizing: border-box;
    width: 159px;
    padding: 8px 1px 0;
    border-right: 1px solid #d3e0f1;
  }
  .tree ul { margin-bottom: 24px; }
  .tree a {
    display: flex;
    align-items: center;
    gap: 5px;
    box-sizing: border-box;
    height: 24px;
    padding-left: 18px;
    border: 1px solid transparent;
    border-radius: 2px;
    color: inherit;
    text-decoration: none;
    white-space: nowrap;
  }
  .tree .child { padding-left: 28px; }
  .tree .selected { border-color: #d5d5d5; background: linear-gradient(#f6f6f6, #e2e2e2); }

  .content { flex: 1; min-width: 0; }
  .heading {
    height: 55px;
    margin: 0 12px;
    padding: 4px 0 0 7px;
    box-sizing: border-box;
    background:
      linear-gradient(90deg, transparent, #cbdaec 10%, #cbdaec 85%, transparent) 0 100% / 100% 1px no-repeat,
      radial-gradient(ellipse 90px 30px at 20% 0, #e6edf8, transparent),
      radial-gradient(ellipse 120px 34px at 48% 0, #e6edf8, transparent);
  }
  h1 { margin: 0; font-size: 19px; font-weight: 400; line-height: 25px; color: #1f6b23; }
  p { margin: 0; line-height: 18px; color: #4c5977; }
  .grid { display: grid; grid-template-columns: repeat(auto-fill, 254px); padding: 7px 0 0 18px; }
  .grid li { display: flex; gap: 6px; height: 56px; }
  .grid div { display: flex; flex-direction: column; padding-top: 4px; line-height: 19px; }
  .grid strong { font-weight: 400; }
  .grid span { color: #6d6d6d; }

  .details {
    display: flex;
    align-items: flex-start;
    gap: 15px;
    box-sizing: border-box;
    height: 53px;
    padding: 3px 18px;
    border-top: 1px solid #c5d4e8;
    background: #eef3fb;
    color: #1e3257;
    font-size: 13px;
  }

  .dock { position: relative; display: flex; height: 30px; }
  .dock::before {
    content: "";
    position: absolute;
    inset: 9px 8px 0 10px;
    background: linear-gradient(#7d97c3, #a8b7d5 75%, #dae2ee 76%, #b3bfd2 84%, #8593ab 88%);
    clip-path: polygon(10px 0, calc(100% - 8px) 0, 100% 80%, 100% 100%, 0 100%, 0 80%);
  }
  .dock ul { position: relative; flex: 1; display: flex; padding: 0 14px 0 20px; }
  .dock li { flex: 1; display: flex; flex-direction: column; align-items: center; padding-top: 2px; }
  .dock .divider { flex: 0 0 11px; }
  .dock i { width: 6px; height: 3px; margin-top: 4px; border-radius: 2px; }
  .dock .running { background: #effcff; box-shadow: 0 0 3px #b9efff; }
  .mark {
    position: absolute;
    right: 1px;
    bottom: 0;
    font: 12px/14px "Open Sans", sans-serif;
    color: #46556d;
    opacity: 0.75;
  }
</style>
